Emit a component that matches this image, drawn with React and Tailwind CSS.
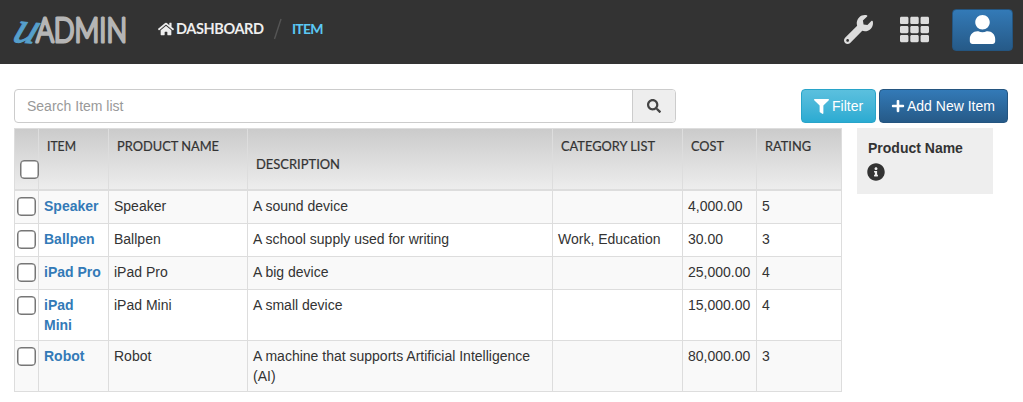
import { FaHome, FaWrench, FaTh, FaUser, FaSearch, FaFilter, FaPlus, FaInfoCircle } from "react-icons/fa";

const items = [
  { name: "Speaker", description: "A sound device", category: "", cost: "4,000.00", rating: 5, height: "h-[33px]" },
  { name: "Ballpen", description: "A school supply used for writing", category: "Work, Education", cost: "30.00", rating: 3, height: "h-[33px]" },
  { name: "iPad Pro", description: "A big device", category: "", cost: "25,000.00", rating: 4, height: "h-[33px]" },
  { name: "iPad Mini", description: "A small device", category: "", cost: "15,000.00", rating: 4, height: "h-[51px]" },
  { name: "Robot", description: "A machine that supports Artificial Intelligence (AI)", category: "", cost: "80,000.00", rating: 3, height: "h-[51px]" },
];

const headers = [
  { label: "ITEM", pad: "pt-[7px]", width: "w-[29px]" },
  { label: "PRODUCT NAME", pad: "pt-[7px]", width: "w-[102px]" },
  { label: "DESCRIPTION", pad: "pt-[25px]", width: "w-[84px]" },
  { label: "CATEGORY LIST", pad: "pt-[7px]", width: "w-[94px]" },
  { label: "COST", pad: "pt-[7px]", width: "w-[33px]" },
  { label: "RATING", pad: "pt-[7px]", width: "w-[46px]" },
];

const cell = "border-r border-b border-[#ddd] pl-[5px] pr-[3px] pt-[5px] align-top";

function Checkbox({ className = "" }) {
  return (
    <input
      type="checkbox"
      className={`block size-[19px] appearance-none rounded-[4px] border border-[#767676] bg-white shadow-[inset_0_0_0_0.5px_#767676] ${className}`}
    />
  );
}

function Logo() {
  return (
    <svg className="h-[34px] w-[118px] overflow-visible" viewBox="0 0 118 34" aria-label="uAdmin">
      <text transform="translate(0 27.5) rotate(5) skewX(-16) scale(1.16 1.12)" x="0" y="0" fontFamily="Liberation Serif, serif" fontStyle="italic" fontSize="40" fill="#559fcb" stroke="#559fcb" strokeWidth="0.9">u</text>
      <text x="25" y="27.5" fontFamily="Lato, sans-serif" fontWeight="300" fontSize="33" fill="#b5b5b5" stroke="#b5b5b5" strokeWidth="3" strokeLinejoin="round" textLength="91" lengthAdjust="spacingAndGlyphs">ADMIN</text>
    </svg>
  );
}

export default function App() {
  return (
    <div className="h-[402px] w-[1023px] overflow-hidden bg-white font-['Liberation_Sans',Arial,sans-serif] text-[14px] leading-5 text-[#333]">
      <header className="flex h-16 items-start bg-[#333] pl-[11px] pr-[10px]">
        <div className="pt-[14px]"><Logo /></div>
        <nav className="ml-[29px] flex h-[57px] items-center font-['Lato',sans-serif] text-[15px] font-bold">
          <FaHome className="mr-[2px] size-4 text-[#eee]" />
          <span className="w-[88px] whitespace-nowrap text-[14.5px] tracking-[-0.4px] text-[#eee]">DASHBOARD</span>
          <svg className="ml-[9px] h-[22px] w-[10px]" viewBox="0 0 10 22"><path d="M8 1 1.5 21" stroke="#555" strokeWidth="1.4" /></svg>
          <span className="ml-[9px] text-[14px] tracking-[-0.8px] text-[#5bc8f5]">ITEM</span>
        </nav>
        <div className="ml-auto flex items-start text-[#ddd]">
          <FaWrench className="mt-[15px] size-[29px]" />
          <FaTh className="ml-[27px] mt-[15px] size-[29px]" />
          <button className="ml-[23px] mt-[9px] flex h-[42px] w-[61px] items-center justify-center rounded-[4px] border border-[#245580] bg-linear-to-b from-[#337ab7] to-[#265a88] text-white">
            <FaUser className="-mt-[1px] size-[29px]" />
          </button>
        </div>
      </header>

      <div className="flex pl-[14px] pr-[15px] pt-[25px]">
        <div className="flex h-[34px] w-[662px] overflow-hidden rounded-[4px] border border-[#ccc]">
          <input placeholder="Search Item list" className="min-w-0 flex-1 pl-3 placeholder:text-[#999]" />
          <div className="flex w-[43px] items-center justify-center border-l border-[#ccc] bg-[#eee]">
            <FaSearch className="size-[14px] text-[#444]" />
          </div>
        </div>
        <div className="ml-auto flex gap-[3px] text-white [text-shadow:0_-1px_0_rgba(0,0,0,.2)]">
          <button className="flex h-[34px] w-[75px] items-center rounded-[4px] border border-[#28a4c9] bg-linear-to-b from-[#5bc0de] to-[#2aabd2] pl-3">
            <FaFilter className="mr-[3px] size-[15px]" />Filter
          </button>
          <button className="flex h-[34px] w-[129px] items-center whitespace-nowrap rounded-[4px] border border-[#245580] bg-linear-to-b from-[#337ab7] to-[#265a88] pl-[11px]">
            <FaPlus className="mr-[2px] size-[14px]" />Add New Item
          </button>
        </div>
      </div>

      <main className="flex pl-[14px] pt-[5px]">
        <table className="w-[828px] table-fixed border-separate border-spacing-0 border-l border-t border-[#ddd]">
          <colgroup>
            <col className="w-[24px]" />
            <col className="w-[70px]" />
            <col className="w-[139px]" />
            <col className="w-[305px]" />
            <col className="w-[130px]" />
            <col className="w-[74px]" />
            <col className="w-[85px]" />
          </colgroup>
          <thead className="bg-linear-to-b from-[#cbcbcb] to-[#eee]">
            <tr className="h-[62px]">
              <th className="border-r border-b-2 border-[#ddd] p-0 pl-[5px] pt-[31px] align-top">
                <Checkbox />
              </th>
              {headers.map((h) => (
                <th key={h.label} className={`border-r border-b-2 border-[#ddd] pl-[8px] text-left align-top font-['Lato',sans-serif] text-[13.5px] font-normal ${h.pad}`}>
                  <svg className={`h-5 overflow-visible ${h.width}`}>
                    <text x="0" y="14.5" fill="#333" stroke="#333" strokeWidth="0.2" textLength="100%" lengthAdjust="spacingAndGlyphs">{h.label}</text>
                  </svg>
                </th>
              ))}
            </tr>
          </thead>
          <tbody>
            {items.map((item) => (
              <tr key={item.name} className={`odd:bg-[#f9f9f9] ${item.height}`}>
                <td className="border-r border-b border-[#ddd] p-0 pl-[2px] pt-[6px] align-top">
                  <Checkbox />
                </td>
                <td className={`${cell} font-bold text-[#337ab7]`}>{item.name}</td>
                <td className={cell}>{item.name}</td>
                <td className={cell}>{item.description}</td>
                <td className={cell}>{item.category}</td>
                <td className={`${cell} whitespace-nowrap`}>{item.cost}</td>
                <td className={cell}>{item.rating}</td>
              </tr>
            ))}
          </tbody>
        </table>
        <aside className="ml-[15px] h-[66px] w-[136px] bg-[#eee] pl-[11px] pt-[10px]">
          <div className="font-bold">Product Name</div>
          <FaInfoCircle className="-ml-px mt-[5px] size-[18px]" />
        </aside>
      </main>
    </div>
  );
}
